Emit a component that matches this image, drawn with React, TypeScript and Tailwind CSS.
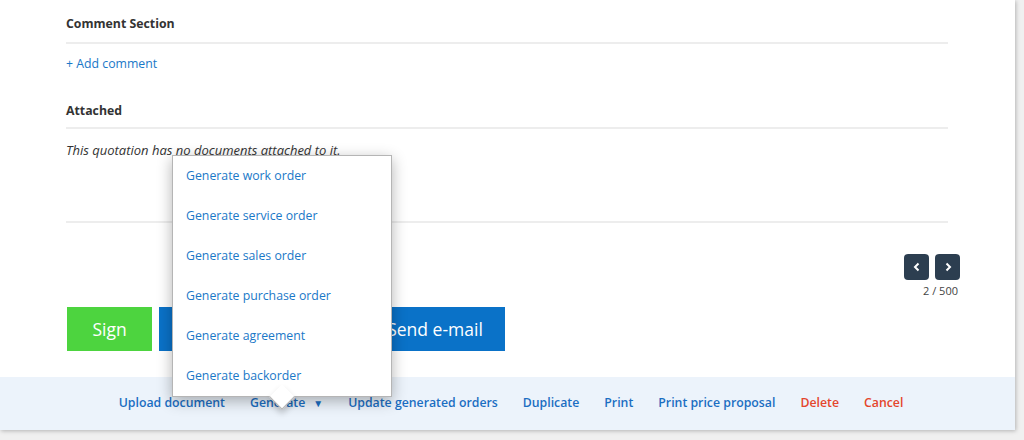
const menuItems = [
  "Generate work order",
  "Generate service order",
  "Generate sales order",
  "Generate purchase order",
  "Generate agreement",
  "Generate backorder",
];

function App() {
  return (
    <div
      className="h-[440px] w-[1024px] overflow-hidden bg-[#f0f0f0] text-[12.3px] text-[#333]"
      style={{ fontFamily: '"Open Sans", "Noto Sans", sans-serif' }}
    >
      <div className="relative w-[1015px] bg-white shadow-[1px_1px_4px_rgba(0,0,0,0.25)]">
        <div className="pl-[66px] pr-[67px]">
          <div className="border-b-2 border-[#ededed] pt-[15px] pb-[9px] font-bold leading-[18px]">
            Comment Section
          </div>
          <div className="mt-[11px] leading-[18px] text-[#1a78c8]">+ Add comment</div>

          <div className="mt-[29px] border-b-2 border-[#ededed] pb-[7px] font-bold leading-[18px]">
            Attached
          </div>
          <div className="mt-[12px] h-[82px] border-b-2 border-[#ededed] text-[13px] italic leading-[18px]">
            This quotation has no documents attached to it.
          </div>
        </div>

        <div className="flex flex-col items-end pr-[55px] pt-[31px]">
          <div className="flex gap-[6px]">
            <button className="flex h-[26px] w-[25px] items-center justify-center rounded-[4px] bg-[#2c3e50] text-white">
              <svg width="8" height="10" viewBox="0 0 8 10" fill="none" stroke="white" strokeWidth="2">
                <path d="M5.5 1.5 2 5l3.5 3.5" />
              </svg>
            </button>
            <button className="flex h-[26px] w-[25px] items-center justify-center rounded-[4px] bg-[#2c3e50] text-white">
              <svg width="8" height="10" viewBox="0 0 8 10" fill="none" stroke="white" strokeWidth="2">
                <path d="M2.5 1.5 6 5 2.5 8.5" />
              </svg>
            </button>
          </div>
          <div className="mt-[3px] pr-[2px] text-[11px] leading-[15px] text-[#444]">2 / 500</div>
        </div>

        <div className="mt-[9px] flex gap-[7px] pl-[67px]">
          <button className="h-[44px] w-[85px] bg-[#4dd43f] text-[17.5px] text-white">Sign</button>
          <button className="h-[44px] w-[195px] bg-[#0a72c8] text-[17.5px] text-white">Send for signing</button>
          <button className="h-[44px] w-[144px] bg-[#0a72c8] pl-[4px] text-[17.5px] text-white">Send e-mail</button>
        </div>

        <div className="mt-[26px] flex h-[53px] items-center justify-center gap-[25px] bg-[#ecf3fb] pl-[7px] font-semibold text-[#1b6ec2]">
          <span>Upload document</span>
          <span className="flex items-center gap-[8px]">
            Generate <span className="text-[10px]">▼</span>
          </span>
          <span>Update generated orders</span>
          <span>Duplicate</span>
          <span>Print</span>
          <span>Print price proposal</span>
          <span className="text-[#e4452c]">Delete</span>
          <span className="text-[#e4452c]">Cancel</span>
        </div>

        <div className="absolute left-[172px] top-[155px] w-[220px] border border-[#b5b5b5] bg-white shadow-[0_4px_14px_rgba(0,0,0,0.3)]">
          {menuItems.map((item) => (
            <div key={item} className="flex h-10 items-center pl-[13px] text-[#1a78c8]">
              {item}
            </div>
          ))}
          <div className="absolute bottom-[-10px] left-[100px] h-[18px] w-[18px] rotate-45 border-b border-r border-[#b5b5b5] bg-white shadow-[3px_3px_6px_rgba(0,0,0,0.2)]" />
        </div>
      </div>
    </div>
  );
}

export default App;
